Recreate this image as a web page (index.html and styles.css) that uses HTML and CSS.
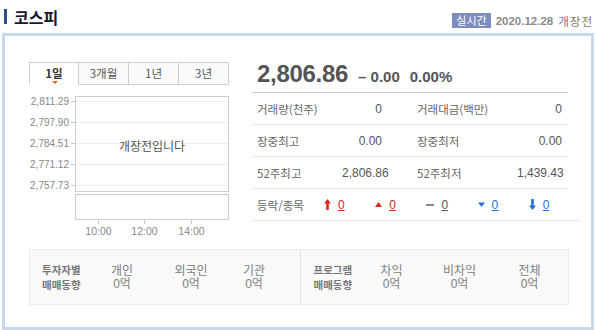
FILE: index.html
```html
<!DOCTYPE html>
<html lang="ko">
<head>
<meta charset="utf-8">
<title>코스피</title>
<link rel="stylesheet" href="styles.css">
</head>
<body>
<div class="head">
  <h2 class="title">코스피</h2>
  <div class="status"><span class="badge">실시간</span><span class="date">2020.12.28</span><span class="state">개장전</span></div>
</div>
<div class="box">
  <div class="main">
    <div class="left">
      <ul class="tabs">
        <li class="tab on">1일</li>
        <li class="tab">3개월</li>
        <li class="tab">1년</li>
        <li class="tab">3년</li>
      </ul>
      <svg class="chart" width="200" height="156" viewBox="0 0 200 156">
        <g class="ylab">
          <text x="40" y="17">2,811.29</text>
          <text x="40" y="38">2,797.90</text>
          <text x="40" y="59">2,784.51</text>
          <text x="40" y="80">2,771.12</text>
          <text x="40" y="101">2,757.73</text>
        </g>
        <g class="grid">
          <line x1="46" y1="13.5" x2="200" y2="13.5"/>
          <line x1="46" y1="34.5" x2="200" y2="34.5"/>
          <line x1="46" y1="55.5" x2="200" y2="55.5"/>
          <line x1="46" y1="76.5" x2="200" y2="76.5"/>
          <line x1="46" y1="97.5" x2="200" y2="97.5"/>
        </g>
        <g class="tick">
          <line x1="42" y1="13.5" x2="46" y2="13.5"/>
          <line x1="42" y1="34.5" x2="46" y2="34.5"/>
          <line x1="42" y1="55.5" x2="46" y2="55.5"/>
          <line x1="42" y1="76.5" x2="46" y2="76.5"/>
          <line x1="42" y1="97.5" x2="46" y2="97.5"/>
          <line x1="69.5" y1="132" x2="69.5" y2="136"/>
          <line x1="115.5" y1="132" x2="115.5" y2="136"/>
          <line x1="162.5" y1="132" x2="162.5" y2="136"/>
        </g>
        <rect class="frame" x="46.5" y="8.5" width="153" height="95"/>
        <rect class="frame" x="46.5" y="106.5" width="153" height="25"/>
        <text class="msg" x="123" y="63">개장전입니다</text>
        <g class="xlab">
          <text x="69.5" y="147">10:00</text>
          <text x="115.5" y="147">12:00</text>
          <text x="162.5" y="147">14:00</text>
        </g>
      </svg>
    </div>
    <div class="right">
      <div class="price"><strong class="now">2,806.86</strong><span class="chg">&#8211; 0.00</span><span class="chg">0.00%</span></div>
      <div class="row"><span class="lb">거래량(천주)</span><span class="val">0</span><span class="lb lb2">거래대금(백만)</span><span class="val">0</span></div>
      <div class="row"><span class="lb">장중최고</span><span class="val">0.00</span><span class="lb lb2">장중최저</span><span class="val">0.00</span></div>
      <div class="row"><span class="lb">52주최고</span><span class="val">2,806.86</span><span class="lb lb2">52주최저</span><span class="val">1,439.43</span></div>
      <div class="row wide">
        <span class="lb lbs">등락/종목</span>
        <span class="it"><svg class="ic" width="7" height="11" viewBox="0 0 7 11"><path class="red" d="M3.5 0 L7 4.5 H4.8 V11 H2.2 V4.5 H0 Z"/></svg><a class="num red-t">0</a></span>
        <span class="it"><svg class="ic" width="7" height="11" viewBox="0 0 7 11"><path class="red" d="M3.5 3 L7 8 H0 Z"/></svg><a class="num red-t">0</a></span>
        <span class="it"><svg class="ic" width="8" height="11" viewBox="0 0 8 11"><rect class="gray" x="0" y="5" width="8" height="2"/></svg><a class="num gray-t">0</a></span>
        <span class="it"><svg class="ic" width="7" height="11" viewBox="0 0 7 11"><path class="blue" d="M0 3.5 H7 L3.5 8 Z"/></svg><a class="num blue-t">0</a></span>
        <span class="it"><svg class="ic" width="7" height="11" viewBox="0 0 7 11"><path class="blue" d="M3.5 11 L7 6.5 H4.8 V0 H2.2 V6.5 H0 Z"/></svg><a class="num blue-t">0</a></span>
      </div>
    </div>
  </div>
  <div class="invest">
    <div class="half">
      <div class="ttl"><span>투자자별</span><span>매매동향</span></div>
      <div class="cell c1"><span>개인</span><span>0억</span></div>
      <div class="cell c2"><span>외국인</span><span>0억</span></div>
      <div class="cell c3"><span>기관</span><span>0억</span></div>
    </div>
    <div class="half second">
      <div class="ttl"><span>프로그램</span><span>매매동향</span></div>
      <div class="cell c1"><span>차익</span><span>0억</span></div>
      <div class="cell c2"><span>비차익</span><span>0억</span></div>
      <div class="cell c3"><span>전체</span><span>0억</span></div>
    </div>
  </div>
</div>
</body>
</html>
```
FILE: styles.css
```css
* { box-sizing: border-box; }
html, body { margin: 0; padding: 0; background: #fff; }
body {
  width: 596px;
  height: 330px;
  overflow: hidden;
  font-family: "Liberation Sans", "Noto Sans CJK KR", sans-serif;
  font-size: 12px;
  color: #555;
}
ul { list-style: none; margin: 0; padding: 0; }

.head {
  height: 33px;
  display: flex;
  justify-content: space-between;
  align-items: center;
  padding: 0 3px 0 4px;
}
.title {
  margin: 0;
  font-family: "Noto Sans CJK KR", sans-serif;
  font-size: 16px;
  font-weight: bold;
  color: #1b1530;
  line-height: 16px;
  border-left: 3px solid #2c4f86;
  padding-left: 7px;
  height: 15px;
  display: flex;
  align-items: center;
}
.status {
  display: flex;
  align-items: center;
  margin-top: 8px;
}
.badge {
  background: #7b8dbd;
  color: #fff;
  font-family: "Noto Sans CJK KR", sans-serif;
  font-size: 11px;
  line-height: 15px;
  padding: 0 4px;
  margin-right: 5px;
}
.date {
  font-weight: bold;
  font-size: 11.5px;
  color: #8a8a8a;
  margin-right: 5px;
}
.state {
  font-family: "Noto Sans CJK KR", sans-serif;
  font-size: 11.5px;
  color: #777;
  letter-spacing: 1px;
}

.box {
  margin: 0 2px;
  height: 297px;
  border: 3px solid #c9d8ea;
  padding: 26px 0 0 24px;
}
.main { display: flex; }
.left { width: 200px; }

.tabs { display: flex; height: 23px; }
.tab {
  width: 50px;
  height: 23px;
  border: 1px solid #cfcfcf;
  border-left: none;
  background: #fafafa;
  text-align: center;
  font-family: "Noto Sans CJK KR", sans-serif;
  font-size: 11.5px;
  line-height: 20px;
  color: #555;
}
.tab:first-child { border-left: 1px solid #cfcfcf; }
.tab.on {
  background: #fff;
  border-bottom-color: #fff;
  font-weight: bold;
  color: #333;
  position: relative;
}
.tab.on::after {
  content: "";
  position: absolute;
  left: 22px;
  bottom: 0;
  border-left: 3px solid transparent;
  border-right: 3px solid transparent;
  border-top: 3px solid #e8641b;
}
.chart { display: block; margin-top: 3px; overflow: visible; }
.chart text { font-family: "Liberation Sans", sans-serif; font-size: 10.5px; fill: #888; }
.ylab text { text-anchor: end; font-size: 10px; }
.xlab text { text-anchor: middle; }
.chart .msg { font-family: "Noto Sans CJK KR", sans-serif; font-size: 12px; fill: #555; text-anchor: middle; }
.grid line { stroke: #eeeeee; stroke-width: 1; }
.tick line { stroke: #c8c8c8; stroke-width: 1; }
.frame { fill: none; stroke: #cccccc; stroke-width: 1; }

.right { width: 328px; margin-left: 23px; }
.price {
  width: 316px;
  height: 31px;
  border-bottom: 1px solid #c8c8c8;
  display: flex;
  align-items: baseline;
  padding-left: 5px;
}
.now { font-size: 24px; font-weight: bold; color: #555; letter-spacing: -0.3px; line-height: 24px; margin-right: 10px; }
.chg { font-size: 15px; font-weight: bold; color: #555; margin-right: 10px; }

.row {
  width: 316px;
  height: 32px;
  border-bottom: 1px solid #e8e8e8;
  display: grid;
  grid-template-columns: 85px 40px 135px 45px;
  align-items: center;
  padding-left: 5px;
}
.lb { font-family: "Noto Sans CJK KR", sans-serif; font-size: 11.5px; color: #666; }
.lb2 { padding-left: 35px; }
.val { text-align: right; font-size: 12px; color: #555; }
.row.wide {
  width: 328px;
  display: flex;
}
.lbs { width: 68px; }
.it { width: 52px; display: flex; align-items: center; }
.ic { display: block; margin-right: 7px; }
.num { text-decoration: underline; font-size: 12px; }
.red { fill: #e1261d; }
.blue { fill: #2a6fd3; }
.gray { fill: #888; }
.red-t { color: #d8231c; }
.blue-t { color: #2a6fd3; }
.gray-t { color: #555; }

.invest {
  margin-top: 5px;
  width: 540px;
  height: 56px;
  background: #f9f9f9;
  border: 1px solid #ebebeb;
  display: flex;
}
.half {
  width: 270px;
  display: flex;
  align-items: center;
  padding-left: 12px;
}
.half.second { border-left: 1px solid #e2e2e2; padding-left: 13px; width: 269px; }
.ttl {
  display: flex;
  flex-direction: column;
  gap: 0;
  font-family: "Noto Sans CJK KR", sans-serif;
  font-weight: bold;
  font-size: 10.5px;
  line-height: 15px;
  color: #777;
  width: 56px;
}
.cell {
  display: flex;
  flex-direction: column;
  align-items: center;
  font-family: "Noto Sans CJK KR", sans-serif;
  font-size: 12px;
  line-height: 15px;
  color: #808080;
}
.cell span + span { font-family: "Liberation Sans", "Noto Sans CJK KR", sans-serif; }
.c1 { width: 40px; margin-left: 4px; }
.c2 { width: 60px; margin-left: 19px; }
.c3 { width: 40px; margin-left: 13px; }
.second .c1 { margin-left: 2px; }
.second .c2 { margin-left: 18px; }
.second .c3 { margin-left: 20px; }
```
